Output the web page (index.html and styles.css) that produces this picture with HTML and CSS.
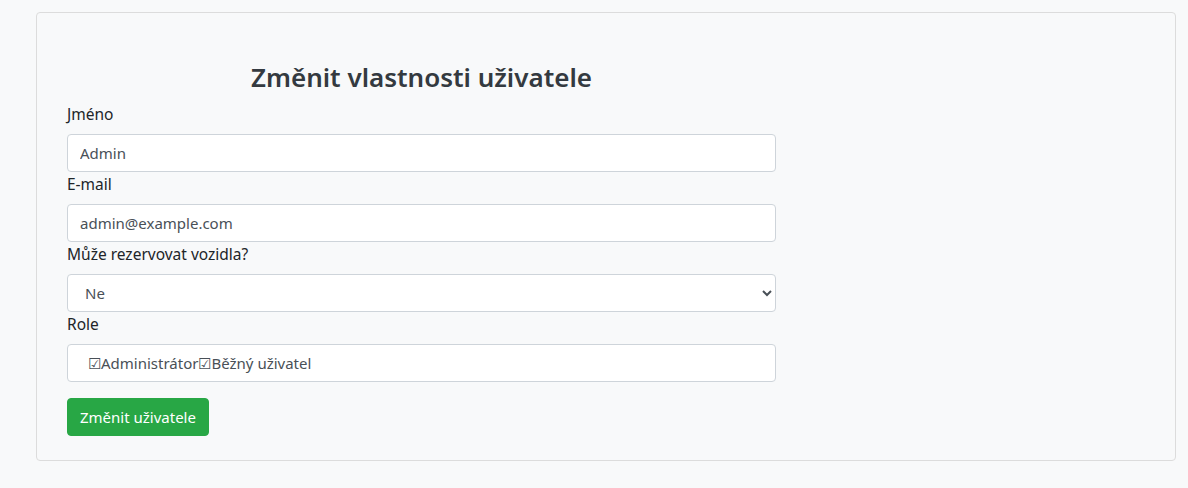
FILE: index.html
```html
<!DOCTYPE html>
<html lang="cs">
<head>
<meta charset="utf-8">
<title>Změnit vlastnosti uživatele</title>
<link rel="stylesheet" href="styles.css">
</head>
<body>
<div class="card">
  <form class="form">
    <h3 class="title">Změnit vlastnosti uživatele</h3>
    <label class="label" for="name">Jméno</label>
    <input class="control" id="name" type="text" value="Admin">
    <label class="label" for="email">E-mail</label>
    <input class="control" id="email" type="email" value="admin@example.com">
    <label class="label" for="can">Může rezervovat vozidla?</label>
    <select class="control select" id="can">
      <option>Ne</option>
      <option>Ano</option>
    </select>
    <label class="label">Role</label>
    <div class="control roles"><span class="role">☑Administrátor</span><span class="role">☑Běžný uživatel</span></div>
    <button class="btn" type="button">Změnit uživatele</button>
  </form>
</div>
</body>
</html>
```
FILE: styles.css
```css
html, body {
  margin: 0;
  padding: 0;
  background: #f8f9fa;
}
body {
  font-family: "Noto Sans", "Segoe UI", sans-serif;
  font-size: 15.5px;
  line-height: 24px;
  color: #212529;
  padding: 12px 12px 0 36px;
}
.card {
  box-sizing: border-box;
  width: 1140px;
  height: 449px;
  border: 1px solid #dcdcdc;
  border-radius: 4px;
  background: #f8f9fa;
  padding: 47px 0 0 30px;
}
.form {
  width: 709px;
  display: flex;
  flex-direction: column;
}
.title {
  margin: 0 0 8px 0;
  text-align: center;
  font-size: 26px;
  font-weight: 600;
  line-height: 34px;
  color: #343a40;
}
.label {
  display: block;
  margin-bottom: 8px;
}
.control {
  box-sizing: border-box;
  height: 38px;
  width: 100%;
  padding: 6px 12px;
  font-family: inherit;
  font-size: 15px;
  line-height: 24px;
  color: #495057;
  background: #fff;
  border: 1px solid #ced4da;
  border-radius: 4px;
  margin: 0;
}
.select {
  padding-left: 13px;
}
.roles {
  padding-left: 20px;
  display: flex;
}
.btn {
  align-self: flex-start;
  margin-top: 16px;
  height: 38px;
  padding: 6px 12px;
  font-family: inherit;
  font-size: 15px;
  line-height: 24px;
  color: #fff;
  background: #28a745;
  border: 1px solid #28a745;
  border-radius: 4px;
}
```
